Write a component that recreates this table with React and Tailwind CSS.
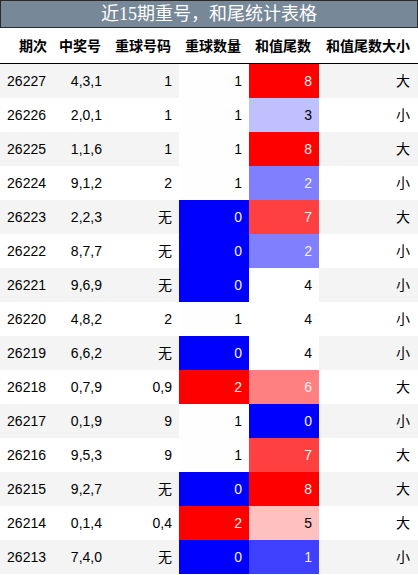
import React from 'react';

const rows = [
  ['26227', '4,3,1', '1', 1, 8, '大'],
  ['26226', '2,0,1', '1', 1, 3, '小'],
  ['26225', '1,1,6', '1', 1, 8, '大'],
  ['26224', '9,1,2', '2', 1, 2, '小'],
  ['26223', '2,2,3', '无', 0, 7, '大'],
  ['26222', '8,7,7', '无', 0, 2, '小'],
  ['26221', '9,6,9', '无', 0, 4, '小'],
  ['26220', '4,8,2', '2', 1, 4, '小'],
  ['26219', '6,6,2', '无', 0, 4, '小'],
  ['26218', '0,7,9', '0,9', 2, 6, '大'],
  ['26217', '0,1,9', '9', 1, 0, '小'],
  ['26216', '9,5,3', '9', 1, 7, '大'],
  ['26215', '9,2,7', '无', 0, 8, '大'],
  ['26214', '0,1,4', '0,4', 2, 5, '大'],
  ['26213', '7,4,0', '无', 0, 1, '小'],
];

// bwr colormap steps
const countColor = {
  0: 'bg-[#0000ff] text-[#f1f1f1]',
  1: 'bg-[#fefefe] text-[#000000]',
  2: 'bg-[#ff0000] text-[#f1f1f1]',
};

const tailColor = {
  0: 'bg-[#0000ff] text-[#f1f1f1]',
  1: 'bg-[#4040ff] text-[#f1f1f1]',
  2: 'bg-[#8080ff] text-[#f1f1f1]',
  3: 'bg-[#c0c0ff] text-[#000000]',
  4: 'bg-[#ffffff] text-[#000000]',
  5: 'bg-[#ffc0c0] text-[#000000]',
  6: 'bg-[#ff8080] text-[#f1f1f1]',
  7: 'bg-[#ff4040] text-[#f1f1f1]',
  8: 'bg-[#ff0000] text-[#f1f1f1]',
};

const grid = 'grid grid-cols-[55px_54px_70px_70px_70px_99px]';
const headers = ['期次', '中奖号', '重球号码', '重球数量', '和值尾数', '和值尾数大小'];

const App = () => {
  return (
    <div className="w-[418px] h-[575px] overflow-hidden bg-white text-black font-['Liberation_Sans','Noto_Sans_CJK_SC',sans-serif]">
      {/* caption */}
      <div className="h-[28px] border border-[#2a2a2a] bg-[#778899] flex items-center justify-center text-white text-[18px] font-['Liberation_Serif','Noto_Sans_CJK_SC',serif]">
        近15期重号，和尾统计表格
      </div>

      {/* header */}
      <div className={`${grid} h-[36px] pt-[2px] border-b border-black items-center text-[14px] font-bold`}>
        {headers.map((h) => (
          <div key={h} className="text-right pr-[8px]">{h}</div>
        ))}
      </div>

      {rows.map((r, i) => (
        <div
          key={r[0]}
          className={`${grid} h-[34px] text-[14px] ${i % 2 === 0 ? 'bg-[#f4f4f4]' : 'bg-white'}`}
        >
          <div className="flex items-center justify-end pr-[9px]">{r[0]}</div>
          <div className="flex items-center justify-end pr-[7px]">{r[1]}</div>
          <div className="flex items-center justify-end pr-[7px]">{r[2]}</div>
          <div className={`flex items-center justify-end pr-[7px] ${countColor[r[3]]}`}>{r[3]}</div>
          <div className={`flex items-center justify-end pr-[7px] ${tailColor[r[4]]}`}>{r[4]}</div>
          <div className="flex items-center justify-end pr-[8px]">{r[5]}</div>
        </div>
      ))}
    </div>
  );
};

export default App;
